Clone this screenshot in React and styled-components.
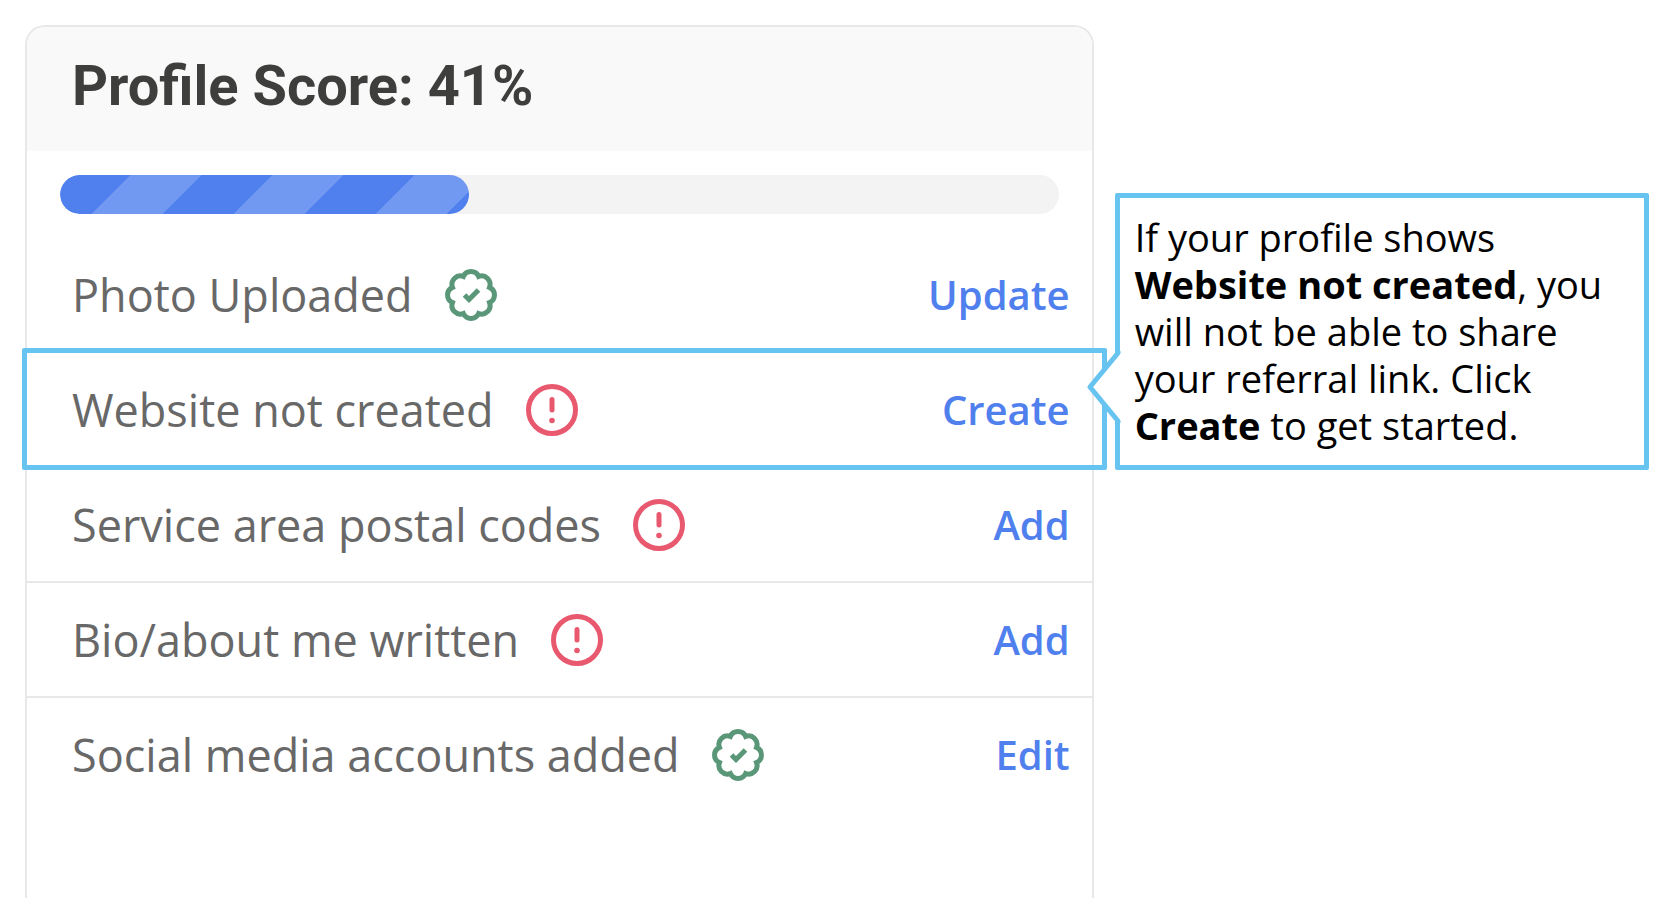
import React from 'react';
import styled, { createGlobalStyle, ThemeProvider } from 'styled-components';


const theme = {
  colors: {
    primary: '#4f80ee',
    primaryLight: '#7299f2',
    highlight: '#67c3ef',
    success: '#5a9678',
    danger: '#e8596f',
    title: '#3e3e3c',
    text: '#686868',
    border: '#e8e8e8',
    headerBg: '#f9f9f9',
    track: '#f3f3f3',
    white: '#fff',
    black: '#000',
  },
};

const GlobalStyle = createGlobalStyle`
  * { box-sizing: border-box; }
  body {
    background-color: ${theme.colors.white};
    font-family: 'Open Sans', 'Noto Sans', sans-serif;
    margin: 0;
  }
`;

const Page = styled.main`
  grid-template-columns: 2fr 1fr;
  padding: 25px 13px 12px 25px;
  min-height: 100vh;
  column-gap: 21px;
  display: grid;
`;

const Card = styled.section`
  border: 2px solid ${({ theme }) => theme.colors.border};
  border-radius: 20px 20px 0 0;
  border-bottom: 0;
`;

const CardHeader = styled.header`
  background-color: ${({ theme }) => theme.colors.headerBg};
  border-radius: 18px 18px 0 0;
  padding: 27px 45px 33px;
`;

const Title = styled.h1`
  color: ${({ theme }) => theme.colors.title};
  font-family: Roboto, sans-serif;
  font-weight: bold;
  line-height: 64px;
  font-size: 56px;
  margin: 0;
`;

const Track = styled.div`
  background-color: ${({ theme }) => theme.colors.track};
  margin: 24px 33px;
  border-radius: 20px;
  overflow: hidden;
  height: 39px;
`;

const Fill = styled.div`
  background-image: linear-gradient(
    135deg,
    ${({ theme }) => theme.colors.primary} 25%,
    ${({ theme }) => theme.colors.primaryLight} 25%,
    ${({ theme }) => theme.colors.primaryLight} 50%,
    ${({ theme }) => theme.colors.primary} 50%,
    ${({ theme }) => theme.colors.primary} 75%,
    ${({ theme }) => theme.colors.primaryLight} 75%
  );
  background-size: 142px 142px;
  border-radius: 20px;
  height: 100%;
`;

const TaskList = styled.ul`
  list-style: none;
  padding: 0;
  margin: 0;
`;

const Task = styled.li`
  border-bottom: 2px solid ${({ theme }) => theme.colors.border};
  padding: 0 22px 0 45px;
  align-items: center;
  position: relative;
  height: 115px;
  display: flex;
  gap: 32px;
  &:last-child { border-bottom-color: transparent; }
`;

const TaskName = styled.span`
  color: ${({ theme }) => theme.colors.text};
  line-height: 64px;
  font-size: 45px;
`;

const TaskAction = styled.button`
  color: ${({ theme }) => theme.colors.primary};
  background: none;
  font-family: inherit;
  margin-left: auto;
  line-height: 64px;
  font-weight: 600;
  font-size: 40px;
  cursor: pointer;
  padding: 0;
  border: 0;
`;

const Highlight = styled.div`
  border: 5px solid ${({ theme }) => theme.colors.highlight};
  inset: -5px -15px -4px -5px;
  pointer-events: none;
  border-radius: 2px;
  position: absolute;
`;

const Icon = styled.svg`
  color: ${({ theme, $done }) => ($done ? theme.colors.success : theme.colors.danger)};
  flex: none;
  height: 52px;
  width: 52px;
`;

const Callout = styled.aside`
  border: 5px solid ${({ theme }) => theme.colors.highlight};
  background-color: ${({ theme }) => theme.colors.white};
  color: ${({ theme }) => theme.colors.black};
  padding: 16px 15px;
  align-self: start;
  border-radius: 2px;
  line-height: 47px;
  margin-top: 168px;
  position: relative;
  font-size: 38px;
`;

const CalloutText = styled.p`
  margin: 0;
`;

const CalloutTail = styled.svg`
  position: absolute;
  height: 80px;
  width: 34px;
  left: -33px;
  top: 149px;
`;

const DoneIcon = () => (
  <Icon $done viewBox="0 0 52 52" fill="none" stroke="currentColor" role="img" aria-label="Done">
    <path
      d="M18.350 7.500 A8.400 8.400 0 0 1 33.650 7.500 A8.400 8.400 0 0 1 44.500 18.350 A8.400 8.400 0 0 1 44.500 33.650 A8.400 8.400 0 0 1 33.650 44.500 A8.400 8.400 0 0 1 18.350 44.500 A8.400 8.400 0 0 1 7.500 33.650 A8.400 8.400 0 0 1 7.500 18.350 A8.400 8.400 0 0 1 18.350 7.500 Z"
      strokeWidth="5"
    />
    <path d="M19.500 26 L24 30.500 L33.500 21" strokeWidth="5" />
  </Icon>
);

const AlertIcon = () => (
  <Icon viewBox="0 0 52 52" fill="none" stroke="currentColor" role="img" aria-label="Missing">
    <circle cx="26" cy="26" r="23.500" strokeWidth="5" />
    <path d="M26 15.500 V26" strokeWidth="5" strokeLinecap="round" />
    <circle cx="26" cy="36.500" r="2.800" fill="currentColor" stroke="none" />
  </Icon>
);

const score = 41;

const tasks = [
  { name: 'Photo Uploaded', done: true, action: 'Update' },
  { name: 'Website not created', done: false, action: 'Create', highlighted: true },
  { name: 'Service area postal codes', done: false, action: 'Add' },
  { name: 'Bio/about me written', done: false, action: 'Add' },
  { name: 'Social media accounts added', done: true, action: 'Edit' },
];

const App = () => (
  <ThemeProvider theme={theme}>
    <GlobalStyle />
    <Page>
      <Card>
        <CardHeader>
          <Title>Profile Score: {score}%</Title>
        </CardHeader>
        <Track role="progressbar" aria-label="Profile score" aria-valuenow={score}>
          <Fill style={{ width: `${score}%` }} />
        </Track>
        <TaskList>
          {tasks.map(({ name, done, action, highlighted }) => (
            <Task key={name}>
              <TaskName>{name}</TaskName>
              {done ? <DoneIcon /> : <AlertIcon />}
              <TaskAction type="button">{action}</TaskAction>
              {highlighted && <Highlight />}
            </Task>
          ))}
        </TaskList>
      </Card>
      <Callout>
        <CalloutTail viewBox="0 0 34 80" aria-hidden="true">
          <path d="M34 6 L31 6 L3 40 L31 74 L34 74 Z" fill={theme.colors.white} />
          <path
            d="M31 4 V6 L3 40 L31 74 V76"
            fill="none"
            stroke={theme.colors.highlight}
            strokeWidth="5"
            strokeLinejoin="round"
          />
        </CalloutTail>
        <CalloutText>
          If your profile shows <b>Website not created</b>, you will not be able to share
          your referral link. Click <b>Create</b> to get started.
        </CalloutText>
      </Callout>
    </Page>
  </ThemeProvider>
);

export default App;
